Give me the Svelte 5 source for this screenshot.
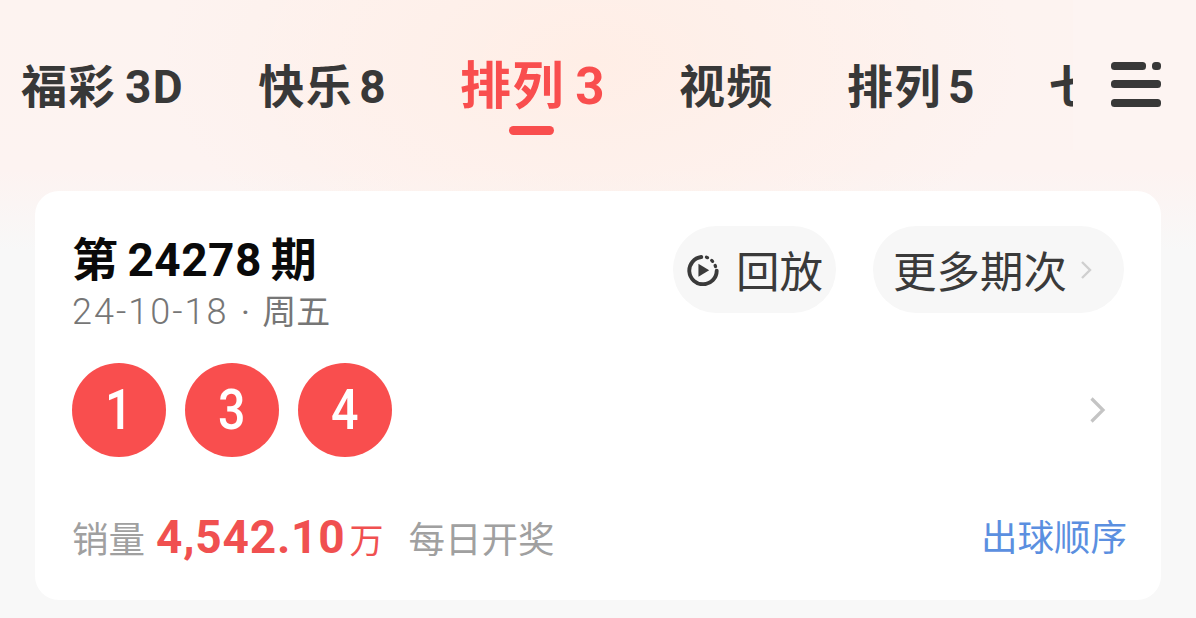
<script>
  const tabs = [
    { label: '福彩 3D' },
    { label: '快乐 8' },
    { label: '排列 3', active: true },
    { label: '视频' },
    { label: '排列 5' },
    { label: '七星彩' }
  ];
  const balls = [1, 3, 4];
</script>

<div class="page">
  <header class="head">
    <nav class="tabs">
      {#each tabs as t}
        <div class="tab" class:active={t.active}>{t.label}</div>
      {/each}
    </nav>
    <div class="fade"></div>
    <svg class="menu" viewBox="0 0 50 45" width="50" height="45" aria-hidden="true">
      <g fill="#383838">
        <rect x="0" y="0" width="35" height="8" rx="3.5" />
        <rect x="41" y="0" width="9" height="8" rx="3.5" />
        <rect x="0" y="18" width="50" height="8" rx="3.5" />
        <rect x="0" y="37" width="50" height="8" rx="3.5" />
      </g>
    </svg>
  </header>

  <section class="card">
    <div class="top">
      <div class="info">
        <div class="issue">第 24278 期</div>
        <div class="date"><span class="dnum">24-10-18</span> · 周五</div>
      </div>
      <div class="actions">
        <div class="pill replay">
          <svg viewBox="2 2 28 28" width="32" height="32" aria-hidden="true">
            <path d="M14.5 4.6A12 12 0 1 0 28 16.6" fill="none" stroke="#3a3a3a" stroke-width="3.4" stroke-linecap="round" />
            <path d="M19 4.8l1 .4M23.6 7.6l.8.8M26.6 12l.4 1" fill="none" stroke="#3a3a3a" stroke-width="2.8" stroke-linecap="round" />
            <path d="M12 10.6l9.4 5.6L12 21.8z" fill="#3a3a3a" />
          </svg>
          <span>回放</span>
        </div>
        <div class="pill more">
          <span>更多期次</span>
          <svg viewBox="0 0 12 20" width="12" height="20" aria-hidden="true">
            <path d="M2 2l8 8-8 8" fill="none" stroke="#cfcfcf" stroke-width="2.4" />
          </svg>
        </div>
      </div>
    </div>

    <div class="mid">
      <div class="balls">
        {#each balls as b}
          <div class="ball"><span>{b}</span></div>
        {/each}
      </div>
      <svg viewBox="0 0 18 28" width="18" height="28" aria-hidden="true">
        <path d="M2.5 2.5L14 14 2.5 25.5" fill="none" stroke="#c4c4c4" stroke-width="3.2" />
      </svg>
    </div>

    <div class="foot">
      <div class="sales">
        <span class="lab">销量</span>
        <span class="amount">4,542.10</span><span class="unit">万</span>
        <span class="freq">每日开奖</span>
      </div>
      <div class="link">出球顺序</div>
    </div>
  </section>
</div>

<style>
  :global(body) {
    margin: 0;
    background: #f8f8f8;
  }
  .page {
    width: 1196px;
    height: 618px;
    overflow: hidden;
    background:
      radial-gradient(ellipse 430px 230px at 590px 60px, #ffeee6 0%, rgba(255, 238, 230, 0) 100%),
      linear-gradient(180deg, #fdf3f0 0, #fdf3f1 170px, #f8f8f8 250px);
    font-family: Roboto, "Noto Sans CJK SC", sans-serif;
  }
  .head {
    position: relative;
    height: 191px;
    overflow: hidden;
  }
  .tabs {
    display: flex;
    align-items: center;
    gap: 73px;
    height: 100px;
    padding: 37px 0 0 21px;
    white-space: nowrap;
  }
  .tab {
    position: relative;
    font-size: 46px;
    line-height: 54px;
    font-weight: 700;
    letter-spacing: 1.5px;
    word-spacing: -7px;
    color: #383838;
  }
  .tab:first-child {
    margin-right: 1px;
    word-spacing: -4px;
  }
  .tab.active {
    font-size: 51px;
    word-spacing: -4px;
    color: #f94e4e;
  }
  .tab.active::after {
    content: "";
    position: absolute;
    left: 49px;
    top: 66px;
    width: 45px;
    height: 9px;
    border-radius: 5px;
    background: #f94e4e;
  }
  .fade {
    position: absolute;
    left: 1073px;
    top: 0;
    width: 123px;
    height: 150px;
    background: #fdf4f2;
  }
  .menu {
    position: absolute;
    left: 1111px;
    top: 62px;
  }
  .card {
    box-sizing: border-box;
    width: 1126px;
    height: 409px;
    margin-left: 35px;
    padding: 41px 37px 0 37px;
    background: #fff;
    border-radius: 24px;
    display: flex;
    flex-direction: column;
  }
  .top {
    display: flex;
    justify-content: space-between;
    align-items: flex-start;
  }
  .issue {
    font-size: 46px;
    line-height: 56px;
    font-weight: 700;
    letter-spacing: 0.5px;
    word-spacing: -3px;
    color: #0a0a0a;
  }
  .date {
    margin-top: 2px;
    font-size: 34px;
    line-height: 44px;
    word-spacing: 4px;
    color: #767676;
  }
  .dnum {
    font-size: 36px;
    font-weight: 300;
    letter-spacing: 2px;
  }
  .actions {
    display: flex;
    gap: 37px;
    margin-top: -6px;
  }
  .pill {
    height: 87px;
    border-radius: 44px;
    background: #f7f7f7;
    display: flex;
    align-items: center;
    font-size: 43.5px;
    color: #3a3a3a;
  }
  .replay {
    width: 163px;
    box-sizing: border-box;
    padding-left: 14px;
    gap: 17px;
  }
  .more {
    width: 251px;
    box-sizing: border-box;
    padding-left: 20px;
    gap: 13px;
  }
  .mid {
    display: flex;
    justify-content: space-between;
    align-items: center;
    margin-top: 29px;
    padding-right: 17px;
  }
  .balls {
    display: flex;
    gap: 19px;
  }
  .ball {
    width: 94px;
    height: 94px;
    border-radius: 50%;
    background: #f94e4e;
    color: #fff;
    font-size: 55px;
    font-weight: 500;
    display: flex;
    align-items: center;
    justify-content: center;
  }
  .ball span {
    display: inline-block;
    transform: scaleX(0.88);
  }
  .foot {
    display: flex;
    justify-content: space-between;
    align-items: center;
    margin-top: 55px;
    font-size: 36.5px;
    line-height: 50px;
  }
  .sales {
    display: flex;
    align-items: baseline;
  }
  .lab, .freq {
    color: #a0a0a0;
  }
  .amount {
    margin-left: 11px;
    font-size: 46px;
    font-weight: 700;
    letter-spacing: 0.8px;
    color: #f05050;
  }
  .unit {
    margin-left: 4px;
    color: #f05050;
    font-size: 34px;
    font-weight: 400;
  }
  .freq {
    margin-left: 25px;
  }
  .link {
    margin-right: -3px;
    color: #5b8fe0;
  }
</style>
